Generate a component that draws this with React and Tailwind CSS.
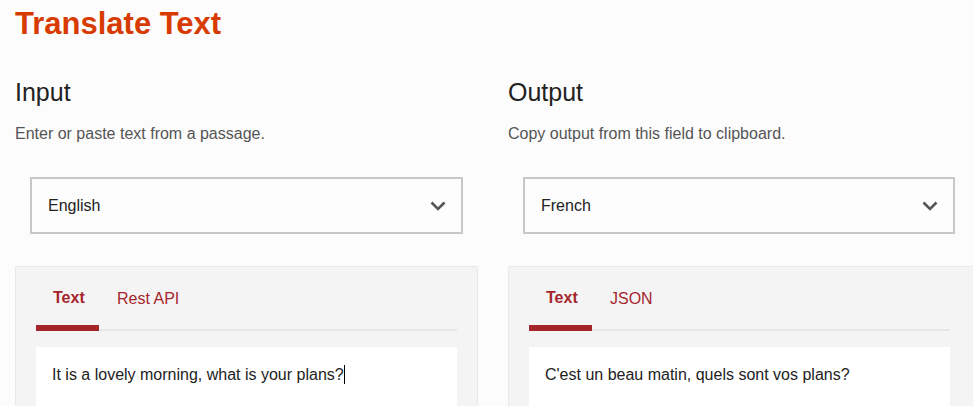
import React from "react";

function Chevron() {
  return (
    <svg width="16" height="10" viewBox="0 0 16 10" className="shrink-0">
      <path d="M1.5 1.5 L8 8 L14.5 1.5" fill="none" stroke="#555555" strokeWidth="2.6" strokeLinecap="butt" strokeLinejoin="miter" />
    </svg>
  );
}

function Column({ heading, desc, lang, tab2, text, cursor, wide }) {
  return (
    <div className={wide ? "w-[465px] shrink-0" : "w-[463px] shrink-0"}>
      <h2 className="mt-[36px] h-[30px] text-[25px] leading-[30px] text-[#222222] font-normal">{heading}</h2>
      <p className="mt-[17px] h-[20px] text-[16px] leading-[20px] text-[#555555]">{desc}</p>
      <div className={"ml-[15px] mt-[33px] h-[57px] border-2 border-[#c8c8c8] bg-[#fdfdfd] flex items-center justify-between pl-[16px] pr-[15px]" + (wide ? " w-[432px]" : " w-[433px]")}>
        <span className="text-[16px] text-[#222222]">{lang}</span>
        <Chevron />
      </div>
      <div className={"mt-[32px] h-[200px] bg-[#f4f4f4] border border-[#e9e9e9] pl-[20px] pt-[20px]" + (wide ? " border-r-0 pr-[23px]" : " pr-[20px]")}>
        <div className="relative flex h-[44px]">
          <div className="absolute left-0 right-0 bottom-0 h-[2px] bg-[#e6e6e6]" />
          <div className="relative w-[63px] h-full">
            <span className="absolute left-[17px] top-[1px] text-[16px] leading-[20px] font-bold text-[#a4262c]">Text</span>
            <div className="absolute left-0 right-0 bottom-0 h-[6px] bg-[#a4262c]" />
          </div>
          <div className="relative pl-[18px]">
            <span className="text-[16px] leading-[20px] text-[#a4262c]">{tab2}</span>
          </div>
        </div>
        <div className="mt-[16px] h-[80px] bg-white px-[16px] pt-[16px]">
          <span className="text-[16px] leading-[20px] text-[#222222]">{text}</span>
          {cursor && <span className="inline-block align-[-4px] w-px h-[19px] bg-black" />}
        </div>
      </div>
    </div>
  );
}

export default function App() {
  return (
    <div className="w-[973px] h-[406px] overflow-hidden bg-[#fcfcfc] pl-[15px]" style={{ fontFamily: '"Liberation Sans", Arial, sans-serif' }}>
      <h1 className="pt-[7px] h-[41px] text-[31px] leading-[34px] font-bold text-[#d83b01]">Translate Text</h1>
      <div className="flex gap-[30px]">
        <Column heading="Input" desc="Enter or paste text from a passage." lang="English" tab2="Rest API" text="It is a lovely morning, what is your plans?" cursor />
        <Column heading="Output" desc="Copy output from this field to clipboard." lang="French" tab2="JSON" text="C'est un beau matin, quels sont vos plans?" wide />
      </div>
    </div>
  );
}
